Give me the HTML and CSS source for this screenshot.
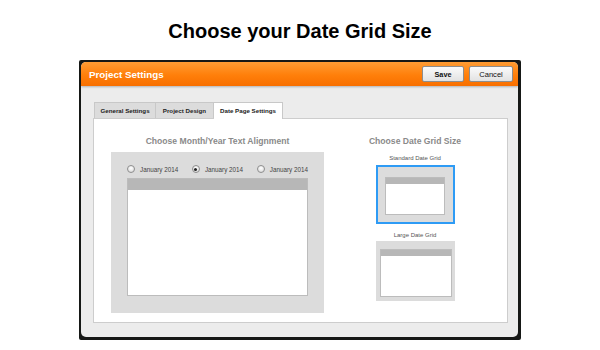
FILE: index.html
```html
<!DOCTYPE html>
<html lang="en">

<head>
    <meta charset="UTF-8">
    <title>Choose your Date Grid Size</title>
    <link rel="stylesheet" href="styles.css">
</head>

<body>
    <h1 class="page-title">Choose your Date Grid Size</h1>

    <div class="frame">
        <div class="dialog">
            <div class="dialog-head">
                <span class="dialog-title">Project Settings</span>
                <div class="actions">
                    <button class="btn btn-save">Save</button>
                    <button class="btn btn-cancel">Cancel</button>
                </div>
            </div>

            <div class="dialog-body">
                <div class="tabs">
                    <div class="tab tab-general">General Settings</div>
                    <div class="tab tab-design">Project Design</div>
                    <div class="tab tab-date tab-active">Date Page Settings</div>
                </div>

                <div class="panel">
                    <section class="align-col">
                        <h2 class="col-title">Choose Month/Year Text Alignment</h2>
                        <div class="align-box">
                            <div class="radios">
                                <label class="radio"><span class="radio-dot"></span>January 2014</label>
                                <label class="radio"><span class="radio-dot radio-on"></span>January 2014</label>
                                <label class="radio"><span class="radio-dot"></span>January 2014</label>
                            </div>
                            <div class="grid-preview grid-main">
                                <div class="grid-bar"></div>
                            </div>
                        </div>
                    </section>

                    <section class="size-col">
                        <h2 class="col-title">Choose Date Grid Size</h2>
                        <div class="size-label">Standard Date Grid</div>
                        <div class="size-box size-standard size-selected">
                            <div class="grid-preview grid-standard">
                                <div class="grid-bar"></div>
                            </div>
                        </div>
                        <div class="size-label">Large Date Grid</div>
                        <div class="size-box size-large">
                            <div class="grid-preview grid-large">
                                <div class="grid-bar"></div>
                            </div>
                        </div>
                    </section>
                </div>
            </div>
        </div>
    </div>
</body>

</html>
```

FILE: styles.css
```css
body {
    margin: 0;
    background-color: white;
    font-family: "Liberation Sans", Arial, sans-serif;
}

.page-title {
    margin: 17px 0 15px;
    line-height: 28px;
    font-size: 20px;
    font-weight: bold;
    text-align: center;
    color: black;
}

.frame {
    box-sizing: border-box;
    width: 442px;
    height: 280px;
    margin-left: 79px;
    padding: 2px 3px 3px 2px;
    background-color: #161816;
    border-radius: 2px;
}

.dialog {
    height: 100%;
    display: flex;
    flex-direction: column;
    background-color: #ececec;
    border-radius: 5px;
    overflow: hidden;
}

.dialog-head {
    height: 24px;
    flex-shrink: 0;
    display: flex;
    justify-content: space-between;
    align-items: center;
    padding: 0 5px 0 8px;
    background: linear-gradient(#ff9c34, #ff7f0a 55%, #f86f00);
    box-shadow: 0 1px 2px rgba(0, 0, 0, 0.25);
}

.dialog-title {
    font-size: 9.8px;
    font-weight: bold;
    color: white;
}

.actions {
    display: flex;
    gap: 5px;
}

.btn {
    height: 16px;
    padding: 0;
    font-family: "Liberation Sans", Arial, sans-serif;
    font-size: 7.6px;
    color: #111;
    background: linear-gradient(#fbfbfb, #e2e2e2);
    border: 1px solid #8d8d8d;
    border-radius: 2px;
}

.btn-save {
    width: 42px;
    font-weight: bold;
    font-size: 7.3px;
}

.btn-cancel {
    width: 44px;
}

.dialog-body {
    flex: 1;
    display: flex;
    flex-direction: column;
    padding: 16px 10px 14px 12px;
}

.tabs {
    display: flex;
    padding-left: 1px;
    margin-bottom: -1px;
}

.tab {
    box-sizing: border-box;
    height: 17px;
    line-height: 16px;
    text-align: center;
    font-size: 6.2px;
    font-weight: bold;
    color: #222;
    background-color: #dcdcdc;
    border: 1px solid #c8c8c8;
    border-bottom: none;
}

.tab-general {
    width: 62px;
}

.tab-design {
    width: 58px;
    border-left: none;
}

.tab-date {
    width: 69px;
    border-left: none;
}

.tab-active {
    background-color: white;
    position: relative;
    z-index: 1;
}

.panel {
    flex: 1;
    display: flex;
    padding: 16px 0 0 17px;
    background-color: white;
    border: 1px solid #cdcdcd;
}

.col-title {
    margin: 0;
    line-height: 12px;
    font-size: 8.6px;
    font-weight: bold;
    text-align: center;
    color: #8a8a8a;
}

.align-col {
    width: 213px;
}

.align-col .col-title {
    margin-bottom: 5px;
}

.align-box {
    box-sizing: border-box;
    height: 161px;
    padding: 12px 16px 0;
    background-color: #dcdcdc;
}

.radios {
    height: 10px;
    margin-bottom: 4px;
    display: flex;
    justify-content: space-between;
    align-items: center;
}

.radio {
    display: flex;
    align-items: center;
    gap: 5px;
    font-size: 6.3px;
    color: #444;
}

.radio-dot {
    box-sizing: border-box;
    width: 8px;
    height: 8px;
    display: flex;
    justify-content: center;
    align-items: center;
    border: 1px solid #8e8e8e;
    border-radius: 50%;
    background: radial-gradient(circle at 50% 35%, #ffffff, #d4d4d4);
}

.radio-on::after {
    content: "";
    width: 3px;
    height: 3px;
    border-radius: 50%;
    background-color: #222;
}

.grid-preview {
    box-sizing: border-box;
    background-color: white;
    border: 1px solid #bcbcbc;
}

.grid-bar {
    background-color: #b7b7b7;
}

.grid-main {
    height: 118px;
}

.grid-main .grid-bar {
    height: 11px;
}

.size-col {
    width: 120px;
    margin-left: 31px;
    display: flex;
    flex-direction: column;
    align-items: center;
}

.size-label {
    margin-top: 6px;
    line-height: 10px;
    font-size: 6px;
    color: #555;
}

.size-box {
    box-sizing: border-box;
    width: 79px;
    display: flex;
    justify-content: center;
    align-items: flex-start;
    background-color: #dcdcdc;
}

.size-standard {
    height: 59px;
    margin-top: 2px;
    padding-top: 10px;
}

.size-selected {
    border: 2px solid #2e9bf5;
}

.size-large {
    height: 60px;
    margin-top: 1px;
    padding: 8px 3px 0 4px;
}

.grid-standard {
    width: 60px;
    height: 38px;
}

.grid-standard .grid-bar {
    height: 6px;
}

.grid-large {
    width: 72px;
    height: 48px;
}

.grid-large .grid-bar {
    height: 6px;
}
```
